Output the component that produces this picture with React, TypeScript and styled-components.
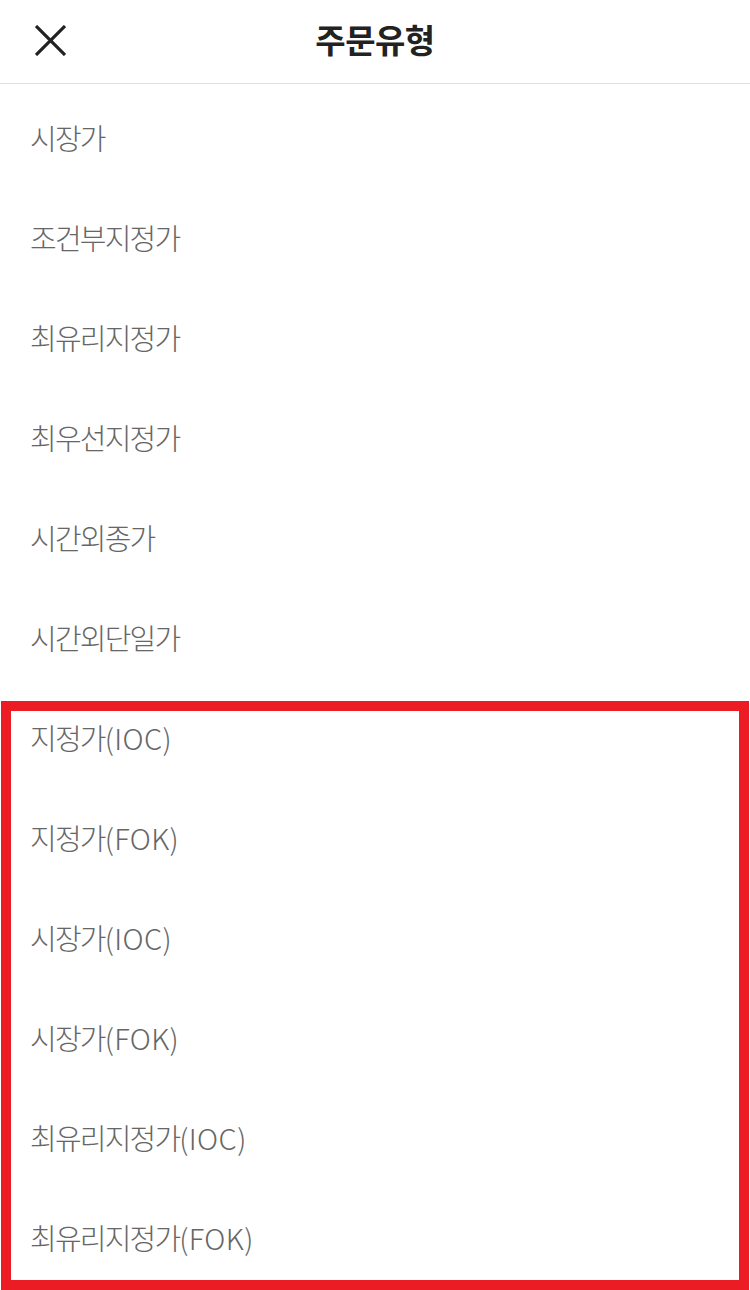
import React from "react";
import styled, { createGlobalStyle } from "styled-components";

const Global = createGlobalStyle`
  html, body { margin: 0; padding: 0; background: #fff; }
  body { font-family: "Noto Sans CJK KR", "Noto Sans", sans-serif; }
`;

const Page = styled.div`
  position: relative;
  width: 750px;
  height: 1290px;
  overflow: hidden;
  background: #fff;
`;

const Header = styled.header`
  height: 83px;
  border-bottom: 1px solid #e0e0e0;
  display: grid;
  grid-template-columns: 100px 1fr 100px;
  align-items: center;
`;

const CloseButton = styled.button`
  border: 0;
  background: none;
  padding: 0 0 3px 35px;
  margin: 0;
  height: 83px;
  display: flex;
  align-items: center;
  cursor: pointer;
`;

const Title = styled.h1`
  margin: 0;
  padding-bottom: 5px;
  text-align: center;
  font-size: 33px;
  font-weight: 700;
  color: #222;
  letter-spacing: -0.5px;
`;

const List = styled.ul`
  list-style: none;
  margin: 0;
  padding: 3px 0 0;
`;

const Item = styled.li`
  height: 100px;
  display: flex;
  align-items: center;
  padding-left: 30px;
  font-size: 29px;
  font-weight: 300;
  letter-spacing: -1.8px;
  color: #666;
  white-space: pre;
`;

const Suffix = styled.span`
  letter-spacing: 0.4px;
`;

const Highlight = styled.div`
  position: absolute;
  left: 1px;
  right: 1px;
  top: 701px;
  bottom: 0;
  border: 10px solid #ec1c24;
  pointer-events: none;
`;

const items = [
  "시장가",
  "조건부지정가",
  "최유리지정가",
  "최우선지정가",
  "시간외종가",
  "시간외단일가",
  "지정가(IOC)",
  "지정가(FOK)",
  "시장가(IOC)",
  "시장가(FOK)",
  "최유리지정가(IOC)",
  "최유리지정가(FOK)",
];

export default function App() {
  return (
    <Page>
      <Global />
      <Header>
        <CloseButton aria-label="닫기">
          <svg width="31" height="31" viewBox="0 0 31 31">
            <path d="M1 1L30 30M30 1L1 30" stroke="#222" strokeWidth="3.2" fill="none" />
          </svg>
        </CloseButton>
        <Title>주문유형</Title>
        <div />
      </Header>
      <List>
        {items.map((t) => {
          const i = t.indexOf("(");
          return (
            <Item key={t}>
              {i < 0 ? t : t.slice(0, i)}
              {i >= 0 && <Suffix>{t.slice(i)}</Suffix>}
            </Item>
          );
        })}
      </List>
      <Highlight />
    </Page>
  );
}
